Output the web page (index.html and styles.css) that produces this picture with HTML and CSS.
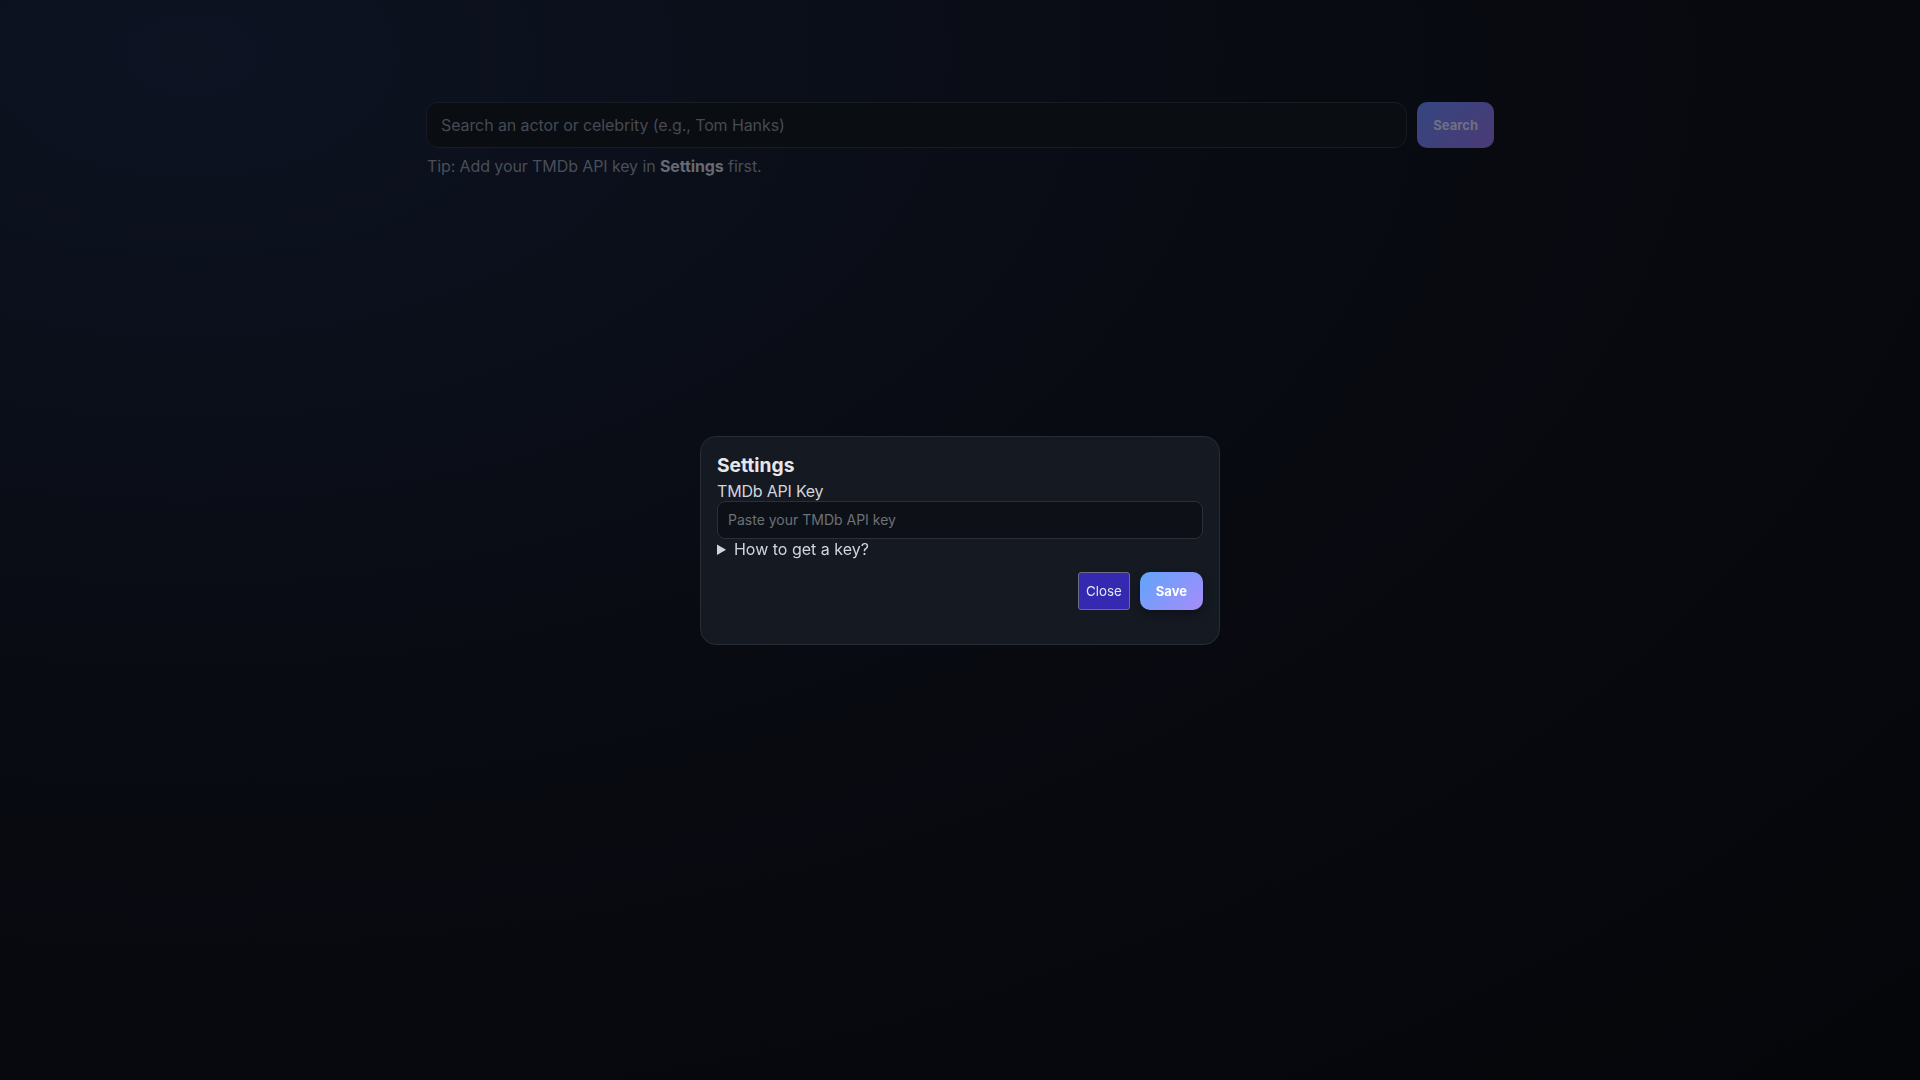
FILE: index.html
```html
<!DOCTYPE html>
<html lang="en">
<head>
    <meta charset="UTF-8">
    <meta name="viewport" content="width=device-width, initial-scale=1.0">
    <title>Celebrity Filmography</title>
    <link rel="stylesheet" href="styles.css">
</head>
<body>
    <div class="container">
        <form class="search-row">
            <input class="search-input" type="text" placeholder="Search an actor or celebrity (e.g., Tom Hanks)">
            <button class="search-btn" type="button" disabled>Search</button>
        </form>
        <p class="tip">Tip: Add your TMDb API key in <strong>Settings</strong> first.</p>
    </div>

    <!-- Settings dialog -->
    <div class="modal-backdrop">
        <div class="modal">
            <h2 class="modal-title">Settings</h2>
            <label class="field-label" for="apiKey">TMDb API Key</label>
            <input class="field-input" id="apiKey" type="text" placeholder="Paste your TMDb API key">
            <details class="help">
                <summary>How to get a key?</summary>
            </details>
            <div class="modal-actions">
                <button class="btn-close" type="button">Close</button>
                <button class="btn-save" type="button">Save</button>
            </div>
        </div>
    </div>
</body>
</html>
```

FILE: styles.css
```css
* {
    margin: 0;
    padding: 0;
    box-sizing: border-box;
}

body {
    font-family: 'Inter', 'Noto Sans', sans-serif;
    background: radial-gradient(ellipse at 10% 5%, #0d1322 0%, #090b12 45%, #05060a 100%);
    min-height: 100vh;
    color: #e5e7eb;
}

.container {
    max-width: 1100px;
    margin: 0 auto;
    padding: 102px 16px 0;
}

.search-row {
    display: flex;
    gap: 10px;
}

.search-input {
    flex: 1;
    height: 46px;
    padding: 0 14px;
    font-family: inherit;
    font-size: 16px;
    letter-spacing: -0.1px;
    color: #9ca3af;
    background: #0a0d12;
    border: 1px solid #171b22;
    border-radius: 12px;
    outline: none;
}

.search-input::placeholder {
    color: #464a52;
}

.search-btn {
    height: 46px;
    padding: 0 16px;
    font-family: inherit;
    font-size: 13px;
    font-weight: 700;
    color: #6f7080;
    background: linear-gradient(135deg, #34467f, #4b3a76);
    border: none;
    border-radius: 10px;
}

.tip {
    margin-top: 6px;
    padding-left: 1px;
    font-size: 16px;
    line-height: 24px;
    letter-spacing: -0.1px;
    color: #494e57;
}

.tip strong {
    color: #666a73;
}

.modal-backdrop {
    position: fixed;
    inset: 0;
    display: flex;
    align-items: center;
    justify-content: center;
}

.modal {
    width: 520px;
    padding: 17px 16px 34px;
    background: #151922;
    border: 1px solid #272c37;
    border-radius: 16px;
}

.modal-title {
    font-size: 19.2px;
    line-height: 22px;
    font-weight: 700;
    color: #e5e7eb;
    margin-bottom: 5px;
}

.field-label {
    display: block;
    font-size: 16px;
    line-height: 20px;
    letter-spacing: -0.2px;
    color: #d1d5db;
}

.field-input {
    display: block;
    width: 100%;
    height: 38px;
    padding: 0 10px;
    font-family: inherit;
    font-size: 14px;
    color: #d1d5db;
    background: #0d1017;
    border: 1px solid #2a2f3a;
    border-radius: 8px;
    outline: none;
}

.field-input::placeholder {
    color: #6b7079;
}

.help summary {
    font-size: 16px;
    line-height: 20px;
    color: #d1d5db;
    cursor: pointer;
}

.modal-actions {
    display: flex;
    justify-content: flex-end;
    gap: 10px;
    margin-top: 13px;
}

.btn-close {
    height: 38px;
    padding: 0 7px;
    font-family: inherit;
    font-size: 13.33px;
    color: #e5e7eb;
    background: #3529b1;
    border: 1px solid #6b6f85;
    border-radius: 3px;
}

.btn-save {
    height: 38px;
    padding: 0 16px;
    font-family: inherit;
    font-size: 13px;
    font-weight: 700;
    color: #ffffff;
    background: linear-gradient(135deg, #60a5fa, #a78bfa);
    border: none;
    border-radius: 10px;
    box-shadow: 0 4px 10px rgba(0, 0, 0, 0.35);
}
```
